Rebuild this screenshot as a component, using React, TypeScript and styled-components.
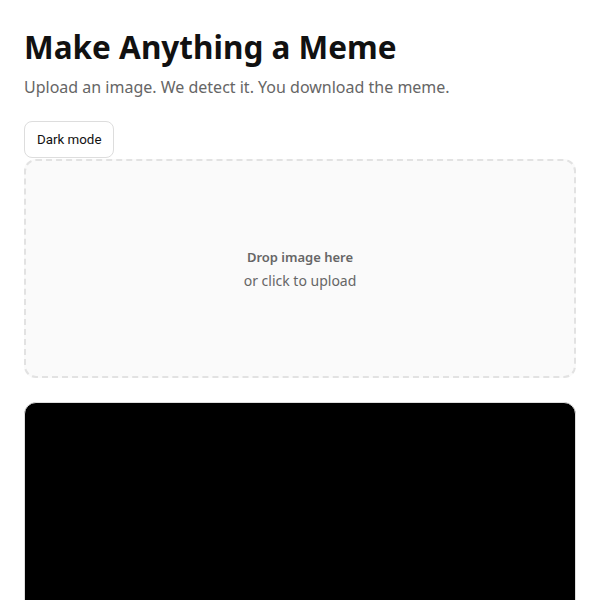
import React, { useState } from 'react'
import styled, { createGlobalStyle } from 'styled-components'

const GlobalStyle = createGlobalStyle`
  html, body {
    margin: 0;
    padding: 0;
    background: #ffffff;
  }
  body {
    font-family: 'Noto Sans', 'Open Sans', sans-serif;
    color: #111;
  }
`

const Page = styled('main')`
  padding: 24px;
  display: flex;
  flex-direction: column;
`

const Title = styled('h1')`
  margin: 1px 0 0;
  font-size: 31.5px;
  line-height: 44px;
  font-weight: 700;
  color: #111;
`

const Subtitle = styled('p')`
  margin: 6px 0 0;
  font-size: 16px;
  line-height: 24px;
  color: #666;
`

const ToggleButton = styled('button')`
  align-self: flex-start;
  margin-top: 22px;
  height: 37px;
  padding: 0 12px;
  border: 1px solid #ddd;
  border-radius: 8px;
  background: #fff;
  font-family: Roboto, 'Noto Sans', sans-serif;
  font-size: 13.33px;
  color: #111;
  cursor: pointer;
`

const DropZone = styled('label')`
  margin-top: 1px;
  height: 219px;
  box-sizing: border-box;
  border: 2px dashed #e2e2e2;
  border-radius: 12px;
  background: #fafafa;
  display: flex;
  flex-direction: column;
  align-items: center;
  justify-content: center;
  gap: 2px;
  cursor: pointer;
  input {
    display: none;
  }
`

const DropTitle = styled('strong')`
  font-size: 13px;
  line-height: 22px;
  font-weight: 600;
  color: #666;
`

const DropHint = styled('span')`
  font-size: 14px;
  line-height: 22px;
  color: #666;
`

const Preview = styled('div')`
  margin-top: 24px;
  height: 320px;
  border: 1px solid #ddd;
  border-radius: 12px;
  background: #000;
`

export default function App() {
  const [dark, setDark] = useState(false)

  return (
    <>
      <GlobalStyle />
      <Page>
        <Title>Make Anything a Meme</Title>
        <Subtitle>Upload an image. We detect it. You download the meme.</Subtitle>
        <ToggleButton onClick={() => setDark(!dark)}>{dark ? 'Light mode' : 'Dark mode'}</ToggleButton>
        <DropZone>
          <input type='file' accept='image/*' />
          <DropTitle>Drop image here</DropTitle>
          <DropHint>or click to upload</DropHint>
        </DropZone>
        <Preview />
      </Page>
    </>
  )
}
